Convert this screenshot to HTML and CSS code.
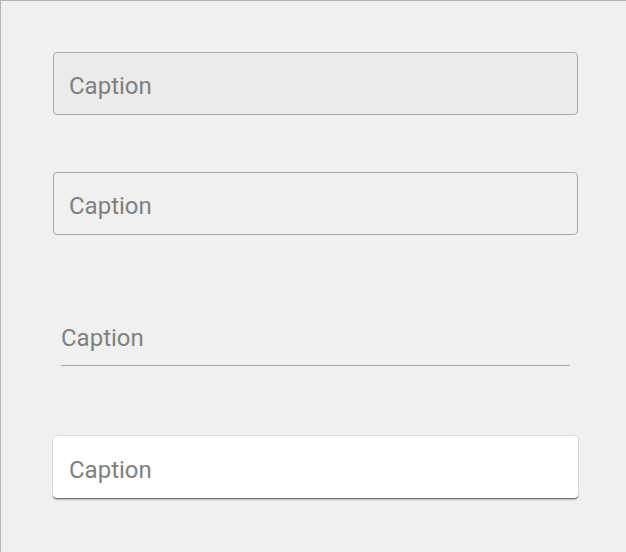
FILE: index.html
```html
<!DOCTYPE html>
<html>
<head>
<meta charset="utf-8">
<link rel="stylesheet" href="styles.css">
</head>
<body>
<div class="page">
  <div class="field field-filled"><span class="caption">Caption</span></div>
  <div class="field field-outline"><span class="caption">Caption</span></div>
  <div class="field field-underline"><span class="caption">Caption</span></div>
  <div class="field field-raised"><span class="caption">Caption</span></div>
</div>
</body>
</html>
```
FILE: styles.css
```css
html, body {
  margin: 0;
  padding: 0;
  background: #f0f0f0;
}
.page {
  box-sizing: border-box;
  width: 627px;
  height: 552px;
  border-top: 1px solid #b5b5b5;
  border-left: 1px solid #b5b5b5;
  background: #f0f0f0;
  padding: 51px 0 0 52px;
  display: flex;
  flex-direction: column;
  font-family: Roboto, "Noto Sans", sans-serif;
}
.field {
  box-sizing: border-box;
  width: 525px;
  height: 63px;
  display: flex;
  align-items: center;
  padding-left: 15px;
  padding-top: 4px;
  border-radius: 4px;
}
.caption {
  font-size: 24px;
  color: #808080;
  line-height: 1;
}
.field-filled {
  background: #ebebeb;
  border: 1px solid #a9a9a9;
}
.field-outline {
  margin-top: 57px;
  border: 1px solid #a9a9a9;
}
.field-underline {
  margin: 68px 8px 0 8px;
  width: 509px;
  padding-left: 0;
  padding-top: 8px;
  border-radius: 0;
  border-bottom: 1px solid #a9a9a9;
}
.field-raised {
  margin-top: 69px;
  padding-left: 16px;
  padding-top: 5px;
  background: #ffffff;
  border-top: 1px solid #dcdcdc;
  box-shadow: 0 1px 1px rgba(0, 0, 0, 0.45), 0 2px 2px rgba(0, 0, 0, 0.2);
}
```
